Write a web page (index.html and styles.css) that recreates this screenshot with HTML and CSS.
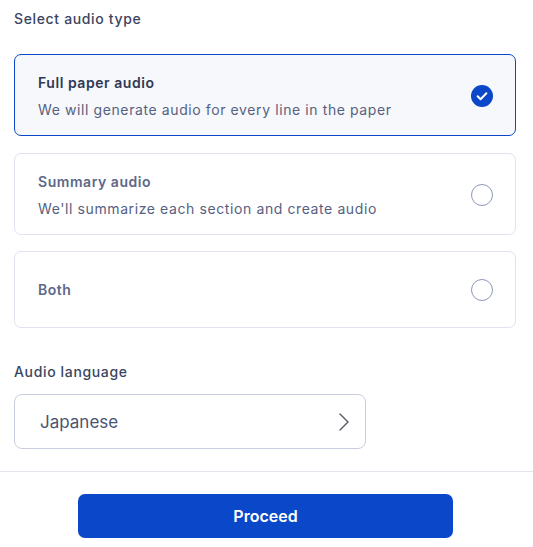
FILE: index.html
```html
<!DOCTYPE html>
<html>
<head>
<meta charset="utf-8">
<link rel="stylesheet" href="styles.css">
</head>
<body>
<div class="panel">
  <div class="content">
    <div class="label">Select audio type</div>
    <div class="options">
      <div class="card selected">
        <div class="text">
          <div class="title">Full paper audio</div>
          <div class="desc">We will generate audio for every line in the paper</div>
        </div>
        <svg class="radio" width="22" height="22" viewBox="0 0 22 22"><circle cx="11" cy="11" r="11" fill="#0a47c9"/><path d="M6.6 11.3l3 2.9 5.8-6" fill="none" stroke="#fff" stroke-width="2" stroke-linecap="round" stroke-linejoin="round"/></svg>
      </div>
      <div class="card">
        <div class="text">
          <div class="title">Summary audio</div>
          <div class="desc">We'll summarize each section and create audio</div>
        </div>
        <span class="radio empty"></span>
      </div>
      <div class="card short">
        <div class="text">
          <div class="title">Both</div>
        </div>
        <span class="radio empty"></span>
      </div>
    </div>
    <div class="label lang">Audio language</div>
    <div class="select">
      <span>Japanese</span>
      <svg width="12" height="20" viewBox="0 0 12 20"><path d="M2 2l8 8-8 8" fill="none" stroke="#555a66" stroke-width="1.4" stroke-linecap="round" stroke-linejoin="round"/></svg>
    </div>
  </div>
  <div class="footer">
    <button class="proceed">Proceed</button>
  </div>
</div>
</body>
</html>
```
FILE: styles.css
```css
* { box-sizing: border-box; }
html, body { margin: 0; padding: 0; background: #fff; }
body { font-family: Inter, "Noto Sans", sans-serif; color: #3a4460; }
.content { padding: 9px 17px 0 14px; }
.label { font-size: 14px; font-weight: 500; line-height: 20px; color: #3b4561; letter-spacing: 0.65px; }
.options { display: flex; flex-direction: column; gap: 17px; margin-top: 25px; }
.card {
  display: flex; align-items: center; justify-content: space-between;
  border: 1px solid #dfe3ee; border-radius: 7px;
  padding: 17px 22px 15px 23px; min-height: 82px; background: #fff;
}
.card.short { min-height: 77px; margin-top: -1px; padding-top: 15px; padding-bottom: 15px; }
.card.selected { border-color: #0a47c9; background: #f6f8fc; }
.title { font-size: 14px; font-weight: 600; line-height: 20px; color: #5d6889; letter-spacing: 0.55px; }
.selected .title { color: #2f3954; }
.desc { font-size: 14px; line-height: 20px; margin-top: 7px; color: #56617f; letter-spacing: 0.6px; }
.radio { flex: none; width: 22px; height: 22px; }
.radio.empty { border: 1px solid #8e98b8; border-radius: 50%; display: block; }
.lang { margin-top: 34px; }
.select {
  margin-top: 12px; width: 352px; height: 55px;
  border: 1px solid #c8cde0; border-radius: 8px;
  display: flex; align-items: center; justify-content: space-between;
  padding: 0 15px 0 25px;
  font-size: 17px; color: #4a5471;
}
.footer { margin-top: 22px; border-top: 1px solid #e2e5ec; padding-top: 22px; display: flex; justify-content: center; }
.proceed {
  width: 375px; height: 44px; border: 0; border-radius: 7px;
  background: #0a47c9; color: #fff; font-family: Inter, "Noto Sans", sans-serif;
  font-size: 16px; font-weight: 600; margin-left: -2px;
}
```
